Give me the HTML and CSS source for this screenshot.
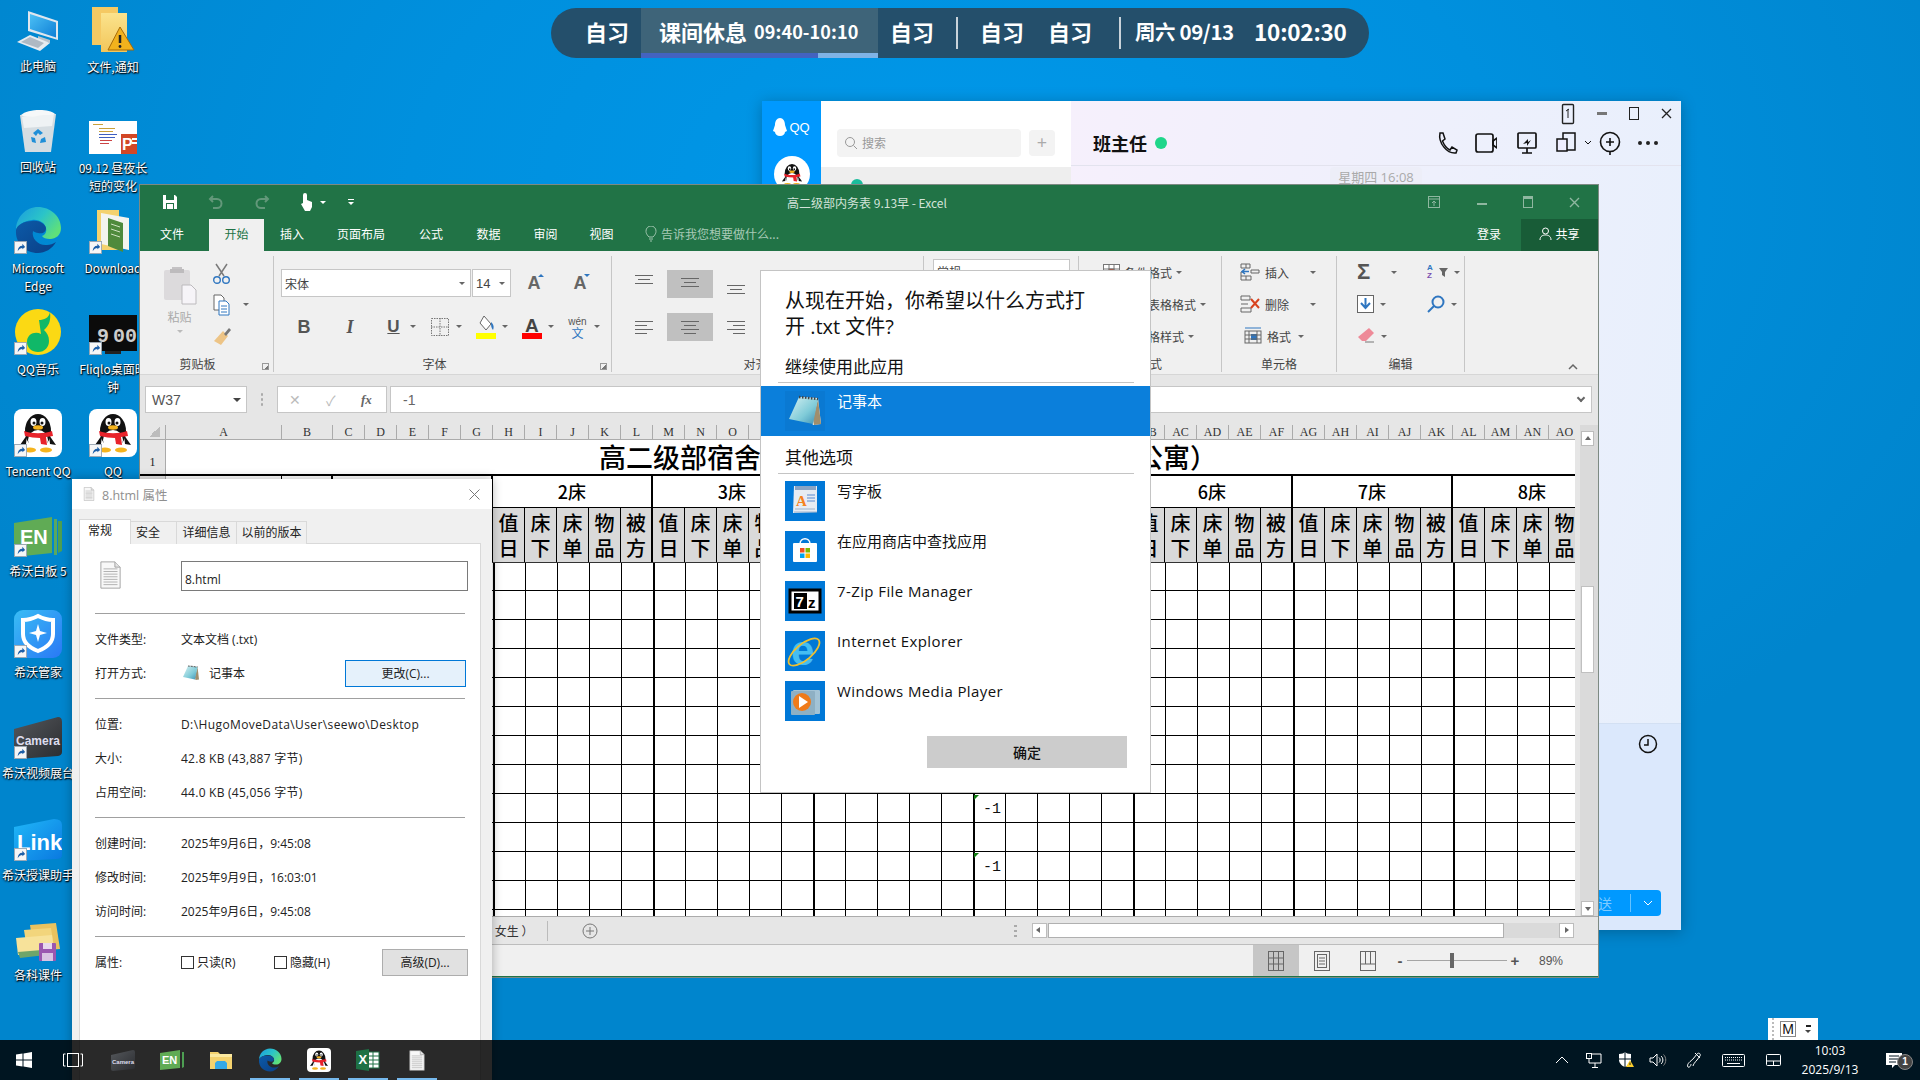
FILE: index.html
```html
<!DOCTYPE html>
<html lang="zh-CN">
<head>
<meta charset="utf-8">
<title>Desktop</title>
<link rel="stylesheet" href="styles.css">
</head>
<body>
<svg class="defs" aria-hidden="true">
  <defs>
    <linearGradient id="edgeTop" x1="0" y1="0" x2="1" y2="0.6"><stop offset="0" stop-color="#1a9be0"/><stop offset=".55" stop-color="#2bc4c8"/><stop offset="1" stop-color="#5fe07a"/></linearGradient>
    <linearGradient id="edgeLow" x1="0" y1="0" x2="1" y2="1"><stop offset="0" stop-color="#0c5aa8"/><stop offset="1" stop-color="#0a3f86"/></linearGradient>
    <linearGradient id="padG" x1="0" y1="0" x2="1" y2="1"><stop offset="0" stop-color="#d8f1f2"/><stop offset=".6" stop-color="#7fcbd8"/><stop offset="1" stop-color="#3d8fb4"/></linearGradient>
    <linearGradient id="folderG" x1="0" y1="0" x2="0" y2="1"><stop offset="0" stop-color="#fbe38d"/><stop offset="1" stop-color="#f2c65a"/></linearGradient>
    <linearGradient id="screenG" x1="0" y1="0" x2="1" y2="1"><stop offset="0" stop-color="#4cc0f5"/><stop offset="1" stop-color="#0e7fd6"/></linearGradient>
    <linearGradient id="camG" x1="0" y1="0" x2="1" y2="1"><stop offset="0" stop-color="#55585c"/><stop offset="1" stop-color="#2a2c30"/></linearGradient>
    <linearGradient id="linkG" x1="0" y1="0" x2="1" y2="1"><stop offset="0" stop-color="#20b8f8"/><stop offset="1" stop-color="#0a78e0"/></linearGradient>
    <linearGradient id="shieldG" x1="0" y1="0" x2="1" y2="1"><stop offset="0" stop-color="#39bdf5"/><stop offset="1" stop-color="#2a78f5"/></linearGradient>
    <symbol id="edge" viewBox="0 0 48 48">
      <path d="M2 24C2 11 12 1 24 1c12 0 23 9 23 21 0 7-5 11-11 11-4 0-7-1-8-3 3-1 5-4 4-8-1-5-7-9-14-8C10 15 3 19 2 24z" fill="url(#edgeTop)"/>
      <path d="M2 24c1-5 8-9 16-9 7-1 13 3 14 7 0 2-1 4-3 5-4 1-9-1-10-2-2 8 6 15 14 14 3 0 6-1 9-3-4 7-11 11-18 11C11 47 1 37 2 24z" fill="url(#edgeLow)"/>
    </symbol>
    <symbol id="penguin" viewBox="0 0 48 48">
      <rect width="48" height="48" rx="8" fill="#fff"/>
      <ellipse cx="24" cy="22" rx="13" ry="17" fill="#111"/>
      <path d="M13 26 6 36l6-1zM35 26l7 10-6-1z" fill="#111"/>
      <ellipse cx="24" cy="31" rx="10" ry="10" fill="#fff"/>
      <ellipse cx="19.500" cy="13" rx="3" ry="4" fill="#fff"/>
      <ellipse cx="28.500" cy="13" rx="3" ry="4" fill="#fff"/>
      <circle cx="20" cy="14" r="1.500" fill="#111"/><circle cx="28" cy="14" r="1.500" fill="#111"/>
      <ellipse cx="24" cy="18.500" rx="5" ry="2.200" fill="#f5b41e"/>
      <path d="M10 22c8 3 20 3 28 0l1 5-7 1 1 8-6-1-1-6c-5 0-10-1-15-2z" fill="#e8232b"/>
      <ellipse cx="16" cy="41" rx="6" ry="2.500" fill="#f5b41e"/><ellipse cx="32" cy="41" rx="6" ry="2.500" fill="#f5b41e"/>
    </symbol>
    <symbol id="shortcut" viewBox="0 0 14 14">
      <rect x=".5" y=".5" width="13" height="13" fill="#f6f6f6" stroke="#9aa6b2"/>
      <path d="M4 11c0-4 2-6 5-6V3l3 3.500L9 9V7.500C7 7.500 5.500 8.500 4 11z" fill="#1d5fa8"/>
    </symbol>
    <symbol id="notepad" viewBox="0 0 40 40">
      <path d="M14 6 33 7l3 26-8 1z" fill="#f2f2ee"/>
      <path d="M33 8l3 25-7 1-1-6z" fill="#a08e6c"/>
      <path d="M14 6 33 8 28 33 4 28z" fill="url(#padG)"/>
      <path d="M14 6 33 8" stroke="#444" stroke-width="2.500" stroke-dasharray="1.500 1.500"/>
    </symbol>
    <symbol id="doc" viewBox="0 0 24 32">
      <path d="M1 1h16l6 6v24H1z" fill="#f8f8f8" stroke="#9c9c9c"/>
      <path d="M17 1v6h6" fill="#e4e4e4" stroke="#9c9c9c"/>
      <path d="M4 9h16M4 12h16M4 15h16M4 18h16M4 21h16M4 24h16M4 27h16" stroke="#a9a9a9"/>
    </symbol>
  </defs>
</svg>

<main class="desktop">

  <div class="dicon c1 t4"><div class="di"><svg width="44" height="42" viewBox="0 0 44 42"><path d="M12 1 42 11v19L12 21z" fill="#dfe6ee"/><path d="M14 4 40 12.500V27.500L14 19z" fill="url(#screenG)"/><path d="M22 26 34 30v3l-12-3z" fill="#b9c3cc"/><path d="M1 32 14 25l20 8-10 8z" fill="#e6ebf0"/><path d="M5 32l9-5 14 6-6 5z" fill="#aeb9c4"/></svg></div><span class="dl">此电脑</span></div>
  <div class="dicon c2 t5"><div class="di"><svg width="44" height="46" viewBox="0 0 44 46"><path d="M1 0h26v38H1z" fill="#f5c963"/><path d="M10 6h26v39H10z" fill="url(#folderG)"/><path d="M29 20 17 43h26z" fill="#f2b21d" stroke="#a66a08"/><path d="M29 28v8" stroke="#222" stroke-width="2.500"/><circle cx="29" cy="39.500" r="1.400" fill="#222"/></svg></div><span class="dl">文件,通知</span></div>

  <div class="dicon c1 t105"><div class="di"><svg width="38" height="44" viewBox="0 0 38 44"><path d="M1 6l36-1-5 38H6z" fill="#d5dde2"/><path d="M2 6c6-6 28-7 34-1-4 4-28 5-34 1z" fill="#f6f8f9"/><path d="M3 8c5-2 10 1 15-1 6-2 12 0 17-2l-2 12-28 2z" fill="#eef2f4"/><path d="M14 24l5-4 5 4-3 2-2-2-2 3zM12 28l4 1 1 5-4-1zM26 28l1 5-6 1 1-4z" fill="#1f8fd8"/></svg></div><span class="dl">回收站</span></div>
  <div class="dicon c2 t106"><div class="di"><svg width="48" height="33" viewBox="0 0 48 33"><rect y="0" width="48" height="33" fill="#fff"/><path d="M4 3h10v1H4zM10 7h16v1H10zM10 10h14v1H10z" fill="#c9a13a"/><path d="M10 13h18v1H10zM10 16h16v1H10z" fill="#3f5fc0"/><path d="M11 19h12v1H11zM11 22h9v1H11z" fill="#c44"/><rect x="32" y="13" width="16" height="20" fill="#d24726"/><text x="33" y="29" class="svgp">P</text><path d="M43 17h5v2h-5zM43 21h5v2h-5z" fill="#fff"/></svg></div><span class="dl">09.12 昼夜长短的变化</span></div>

  <div class="dicon c1 t206"><div class="di"><svg class="ic48"><use href="#edge"/></svg><svg class="sc"><use href="#shortcut"/></svg></div><span class="dl">Microsoft Edge</span></div>
  <div class="dicon c2 t206"><div class="di"><svg width="34" height="44" viewBox="0 0 34 44"><path d="M1 0h22v40H1z" fill="#f4d26e"/><path d="M5 3l28 5v32L5 34z" fill="#f4f4ee"/><path d="M12 8l15 5v29l-15-6z" fill="#4f8a3c"/><path d="M15 14l9 3M15 19l9 3M15 24l9 3" stroke="#cfe3c2"/></svg><svg class="sc"><use href="#shortcut"/></svg></div><span class="dl">Download</span></div>

  <div class="dicon c1 t307"><div class="di"><svg width="46" height="46" viewBox="0 0 46 46"><ellipse cx="23" cy="23" rx="23" ry="23" fill="#fbd914"/><path d="M35 3c-1 6-6 8-11 8l2 14c-6-3-14 0-14 8 0 6 5 10 11 10 7 0 11-5 11-11 0-5-2-8-5-11l2-2c3-3 5-8 4-16z" fill="#10b868"/></svg><svg class="sc"><use href="#shortcut"/></svg></div><span class="dl">QQ音乐</span></div>
  <div class="dicon c2 t307"><div class="di"><svg width="48" height="40" viewBox="0 0 48 40"><rect width="48" height="36" fill="#0b0b0b"/><text x="8" y="27" class="svgclock">9</text><text x="24" y="27" class="svgclock">00</text><path d="M16 36h16v3H16z" fill="#222"/></svg><svg class="sc"><use href="#shortcut"/></svg></div><span class="dl">Fliqlo桌面时钟</span></div>

  <div class="dicon c1 t409"><div class="di"><svg class="ic48"><use href="#penguin"/></svg><svg class="sc"><use href="#shortcut"/></svg></div><span class="dl">Tencent QQ</span></div>
  <div class="dicon c2 t409"><div class="di"><svg class="ic48"><use href="#penguin"/></svg><svg class="sc"><use href="#shortcut"/></svg></div><span class="dl">QQ</span></div>

  <div class="dicon c1 t509"><div class="di"><svg width="48" height="40" viewBox="0 0 48 40"><path d="M44 4h4v30l-4 2z" fill="#4d9e52"/><path d="M40 2h3v36h-3z" fill="#5aa85f"/><path d="M0 6 38 0v36L0 40z" fill="#60ab55"/><text x="6" y="27" class="svgen">EN</text></svg><svg class="sc"><use href="#shortcut"/></svg></div><span class="dl">希沃白板 5</span></div>
  <div class="dicon c1 t610"><div class="di"><svg class="ic48" viewBox="0 0 48 48"><rect width="48" height="48" rx="9" fill="url(#shieldG)"/><path d="M9 10c6 0 11-2 15-4 4 2 9 4 15 4v14c0 9-7 14-15 17C16 38 9 33 9 24z" fill="none" stroke="#fff" stroke-width="4"/><path d="M24 14l2 7 7 2-7 2-2 7-2-7-7-2 7-2z" fill="#fff"/></svg><svg class="sc"><use href="#shortcut"/></svg></div><span class="dl">希沃管家</span></div>
  <div class="dicon c1 t711"><div class="di"><svg width="48" height="42" viewBox="0 0 48 42"><path d="M0 12 44 0q4 0 4 5v30q0 3-4 4L4 42q-4 0-4-4z" fill="url(#camG)"/><text x="2" y="28" class="svgcam">Camera</text></svg><svg class="sc"><use href="#shortcut"/></svg></div><span class="dl">希沃视频展台</span></div>
  <div class="dicon c1 t813"><div class="di"><svg width="48" height="42" viewBox="0 0 48 42"><path d="M0 8 40 0q8 0 8 6v30q0 4-6 4L4 42q-4 0-4-4z" fill="url(#linkG)"/><text x="3" y="31" class="svglink">Link</text></svg><svg class="sc"><use href="#shortcut"/></svg></div><span class="dl">希沃授课助手</span></div>
  <div class="dicon c1 t913"><div class="di"><svg width="44" height="38" viewBox="0 0 44 38"><path d="M14 2l26-2 4 26-26 2z" fill="#e9c25f"/><path d="M8 7l27-2 4 26-27 2z" fill="#f2d57c"/><path d="M0 15l36-3 2 17-36 3z" fill="#f7e29a"/><path d="M2 29l36-3v5L4 35z" fill="#6fa56a"/><rect x="23" y="20" width="17" height="18" rx="1" fill="#9a57b0"/><rect x="27" y="20" width="9" height="6" fill="#e8d8ee"/><rect x="26" y="30" width="11" height="8" fill="#d9c4e3"/></svg></div><span class="dl">各科课件</span></div>

  <!-- class timetable bar -->
  <div class="sched">
    <span class="s-a s-first">自习</span>
    <div class="s-now">
      <div class="s-now-t"><span class="s-big">课间休息</span><span class="s-time">09:40-10:10</span></div>
      <div class="s-prog"><i class="s-p1"></i><i class="s-p2"></i></div>
    </div>
    <span class="s-a s-second">自习</span>
    <i class="s-div"></i>
    <span class="s-a s-third">自习</span>
    <span class="s-a s-fourth">自习</span>
    <i class="s-div"></i>
    <span class="s-date">周六 09/13</span>
    <span class="s-clock">10:02:30</span>
  </div>

  <!-- QQ window -->
  <section class="qq">
    <div class="qq-rail">
      <div class="qq-logo"><svg width="14" height="18" viewBox="0 0 14 18"><path d="M7 0c3 0 5 3 5 7l2 6-2 1c0 2-2 4-5 4s-5-2-5-4l-2-1 2-6c0-4 2-7 5-7z" fill="#fff"/></svg><span>QQ</span></div>
      <svg class="qq-ava" width="36" height="36" viewBox="0 0 48 48"><circle cx="24" cy="24" r="24" fill="#fff"/><use href="#penguin" x="6" y="2" width="36" height="46"/></svg>
    </div>
    <div class="qq-list">
      <div class="qq-search">
        <div class="qq-sbox"><svg width="14" height="14" viewBox="0 0 14 14"><circle cx="6" cy="6" r="4.500" fill="none" stroke="#999"/><path d="M9.500 9.500 13 13" stroke="#999"/></svg><span>搜索</span></div>
        <div class="qq-plus">+</div>
      </div>
      <div class="qq-row"><i class="qq-teal"></i></div>
    </div>
    <div class="qq-chat">
      <div class="qq-ctrl">
        <svg width="14" height="22" viewBox="0 0 14 22"><rect x="1.500" y="1.500" width="11" height="19" rx="1" fill="none" stroke="#222" stroke-width="1.400"/><path d="M7 6v9M5 8l3-2" stroke="#222"/></svg>
        <i class="qq-min"></i>
        <i class="qq-max"></i>
        <svg width="11" height="11" viewBox="0 0 11 11"><path d="M1 1l9 9M10 1l-9 9" stroke="#222" stroke-width="1.300"/></svg>
      </div>
      <div class="qq-head">
        <h2>班主任</h2><i class="qq-dot"></i>
        <div class="qq-tools">
          <svg width="24" height="24" viewBox="0 0 24 24" fill="none" stroke="#111" stroke-width="1.500"><path d="M5 2 8 2 10 8 7.500 10C9 14 11 17 15 19L17 16 22 19 21 22C12 23 3 12 5 2z"/></svg>
          <svg class="m19" width="22" height="24" viewBox="0 0 22 24" fill="none" stroke="#111" stroke-width="1.700"><rect x="1" y="3" width="17" height="18" rx="2"/><path d="M18 10l4-3v10l-4-3z"/></svg>
          <svg class="m19" width="22" height="24" viewBox="0 0 22 24" fill="none" stroke="#111" stroke-width="1.700"><rect x="2" y="2" width="18" height="15" rx="1"/><path d="M11 17v5M6 22h10"/><path d="M7 13l5-5v3l3-2-4 6v-3z" fill="#111" stroke="none"/></svg>
          <svg class="m17" width="36" height="24" viewBox="0 0 36 24" fill="none" stroke="#111" stroke-width="1.500"><rect x="8" y="2" width="12" height="17"/><rect x="2" y="8" width="10" height="12" fill="#eef"/><path d="M30 10l3 3 3-3" stroke-width="1"/></svg>
          <svg class="m7" width="24" height="26" viewBox="0 0 24 26" fill="none" stroke="#111" stroke-width="1.600"><circle cx="12" cy="12" r="9.500"/><path d="M12 8v8M8 12h8M12 22v3"/></svg>
          <svg class="m15" width="22" height="24" viewBox="0 0 22 24"><circle cx="3" cy="12" r="2" fill="#222"/><circle cx="11" cy="12" r="2" fill="#222"/><circle cx="19" cy="12" r="2" fill="#222"/></svg>
        </div>
      </div>
      <div class="qq-msgs"><span class="qq-stamp">星期四 16:08</span></div>
      <div class="qq-input">
        <svg class="qq-clock" width="20" height="20" viewBox="0 0 20 20" fill="none" stroke="#111" stroke-width="1.500"><circle cx="10" cy="10" r="8.500"/><path d="M10 5v6H6"/></svg>
        <div class="qq-send"><span>发送</span><i></i><svg width="12" height="8" viewBox="0 0 12 8"><path d="M2 2l4 4 4-4" fill="none" stroke="#fff"/></svg></div>
      </div>
    </div>
  </section>

  <!-- Excel window -->
  <section class="xl">
    <div class="xl-title">
      <div class="qat">
        <svg width="16" height="16" viewBox="0 0 16 16"><path d="M1 1h12l2 2v12H1z" fill="#fff"/><rect x="4" y="1" width="8" height="5" fill="#217346"/><rect x="4" y="9" width="8" height="6" fill="#217346"/><rect x="5" y="10" width="6" height="5" fill="#fff"/></svg>
        <svg class="q-un" width="16" height="16" viewBox="0 0 16 16" fill="none" stroke="#63987a" stroke-width="2"><path d="M5 2 2 5l3 3M2 5h7a4 4 0 0 1 0 9H5"/></svg>
        <svg class="q-re" width="16" height="16" viewBox="0 0 16 16" fill="none" stroke="#63987a" stroke-width="2"><path d="M11 2l3 3-3 3M14 5H7a4 4 0 0 0 0 9h4"/></svg>
        <svg class="q-to" width="14" height="18" viewBox="0 0 14 18"><path d="M3 2a2 2 0 0 1 4 0v5l5 2v5l-2 4H5L1 11l2-1z" fill="#fff"/></svg>
        <i class="caret wh"></i>
        <span class="q-cu"><i></i><i class="caret wh"></i></span>
      </div>
      <span class="xl-name">高二级部内务表 9.13早 - Excel</span>
      <div class="xl-win">
        <svg width="14" height="12" viewBox="0 0 14 12" fill="none" stroke="#8fb7a0"><rect x="1.500" y=".5" width="11" height="11"/><path d="M1 3h12M7 10V5M5 7l2-2 2 2"/></svg>
        <svg width="10" height="10" viewBox="0 0 10 10"><path d="M0 6h10v2H0z" fill="#8fb7a0"/></svg>
        <svg width="10" height="12" viewBox="0 0 10 12" fill="none" stroke="#8fb7a0"><rect x=".5" y=".5" width="9" height="11"/><path d="M0 2h10" stroke-width="2"/></svg>
        <svg width="11" height="11" viewBox="0 0 11 11"><path d="M1 1l9 9M10 1l-9 9" stroke="#8fb7a0" stroke-width="1.400"/></svg>
      </div>
    </div>
    <nav class="xl-tabs">
      <span class="t t-file">文件</span><span class="t t-on">开始</span><span class="t t-ins">插入</span><span class="t t-page">页面布局</span><span class="t t-f">公式</span><span class="t t-d">数据</span><span class="t t-r">审阅</span><span class="t t-v">视图</span>
      <span class="t-tell"><svg width="12" height="16" viewBox="0 0 12 16" fill="none" stroke="#9fc5ae"><path d="M4 11C1 8 1 6 1 5a5 5 0 0 1 10 0c0 1 0 3-3 6zM4 13h4M5 15h2"/></svg>告诉我您想要做什么...</span>
      <span class="t-login">登录</span>
      <span class="t-share"><svg width="13" height="13" viewBox="0 0 13 13" fill="none" stroke="#fff"><circle cx="6.500" cy="4" r="3"/><path d="M1 13c0-4 3-5 5.500-5S12 9 12 13"/></svg>共享</span>
    </nav>
    <div class="ribbon">
      <div class="rg g-clip">
        <div class="rg-body clip-body">
          <div class="paste">
            <svg width="34" height="40" viewBox="0 0 34 40"><rect x="1" y="5" width="26" height="30" rx="2" fill="#dcdadc"/><path d="M9 5h10V2h-10z" fill="#c4c2c4"/><rect x="7" y="4" width="14" height="4" fill="#bdbbbd"/><path d="M19 20h9l5 5v14H19z" fill="#f6f4f8" stroke="#bcbabd"/></svg>
            <span>粘贴</span><i class="caret lt"></i>
          </div>
          <div class="clip-small">
            <div><svg width="17" height="22" viewBox="0 0 17 22" fill="none"><path d="M3 1l8 12M14 1 6 13" stroke="#7a7a7a" stroke-width="1.500"/><circle cx="4" cy="17" r="3.300" stroke="#2f76c0" stroke-width="1.400"/><circle cx="13" cy="17" r="3.300" stroke="#2f76c0" stroke-width="1.400"/></svg></div>
            <div class="cp"><svg width="17" height="22" viewBox="0 0 17 22" fill="none" stroke="#666"><path d="M1 1h7l3 3v12H1z" fill="#fff"/><path d="M6 7h7l3 3v11H6z" fill="#fff" stroke="#2f76c0"/><path d="M8 12h6M8 15h6M8 18h6" stroke="#2f76c0"/></svg><i class="caret"></i></div>
            <div><svg width="18" height="20" viewBox="0 0 18 20"><path d="M10 5l5 5-7 9-7-4z" fill="#edc486"/><path d="M11 8l5-6 2 2-5 6z" fill="#777"/></svg></div>
          </div>
        </div>
        <div class="rg-label lab-clip">剪贴板<i class="launch"></i></div>
      </div>
      <div class="rg g-font">
        <div class="rg-body font-body">
          <div class="frow1">
            <div class="fbox fname"><span>宋体</span><i class="caret"></i></div>
            <div class="fbox fsize"><span>14</span><i class="caret"></i></div>
            <div class="fbtn"><b class="fa">A</b><i class="tri up"></i></div>
            <div class="fbtn"><b class="fa fa2">A</b><i class="tri dn"></i></div>
          </div>
          <div class="frow2">
            <div class="fit"><b class="gl">B</b></div>
            <div class="fit"><b class="gl it">I</b></div>
            <div class="fit sh"><b class="gl un">U</b><i class="caret"></i></div>
            <div class="fit sh"><svg width="18" height="18" viewBox="0 0 18 18" fill="none" stroke="#777" stroke-dasharray="1.500 1"><rect x=".5" y=".5" width="17" height="17"/><path d="M9 0v18M0 9h18"/></svg><i class="caret"></i></div>
            <div class="fit sh"><svg width="20" height="24" viewBox="0 0 20 24"><path d="M8 1l7 8-5 6-6-7z" fill="#fff" stroke="#666"/><path d="M15 7c3 3 3 5 2 8-2-2-2-5-2-8z" fill="#2f76c0"/><rect y="18" width="20" height="6" fill="#ff0"/></svg><i class="caret"></i></div>
            <div class="fit sh"><svg width="20" height="24" viewBox="0 0 20 24"><text x="3" y="17" class="svga">A</text><rect y="18" width="20" height="6" fill="#f00"/></svg><i class="caret"></i></div>
            <div class="fit sh wen"><span class="w1">wén</span><span class="w2">文</span><i class="caret"></i></div>
          </div>
        </div>
        <div class="rg-label lab-font">字体<i class="launch"></i></div>
      </div>
      <div class="rg g-align">
        <div class="rg-body al-body">
          <i class="al a-top"></i><i class="al a-mid on"></i><i class="al a-bot"></i>
          <i class="al a-l"></i><i class="al a-c on"></i><i class="al a-r"></i>
        </div>
        <div class="rg-label">对齐方式</div>
      </div>
      <div class="rg g-num">
        <div class="rg-body num-body"><div class="nbox">常规</div></div>
        <div class="rg-label">数字</div>
      </div>
      <div class="rg g-sty">
        <div class="rg-body col-list">
          <div class="rrow"><svg width="17" height="16" viewBox="0 0 17 16" fill="none" stroke="#777"><rect x=".5" y=".5" width="16" height="15" fill="#fff"/><path d="M0 5h17M0 10h17M6 0v16M11 0v16"/><rect x="6" y="5" width="5" height="5" fill="#d24726"/></svg><span>条件格式</span><i class="caret"></i></div>
          <div class="rrow"><svg width="17" height="16" viewBox="0 0 17 16" fill="none" stroke="#777"><rect x=".5" y=".5" width="16" height="15" fill="#fff"/><path d="M0 5h17M0 10h17"/></svg><span>套用表格格式</span><i class="caret"></i></div>
          <div class="rrow"><svg width="17" height="16" viewBox="0 0 17 16" fill="none" stroke="#777"><rect x=".5" y=".5" width="16" height="15" fill="#fff"/></svg><span>单元格样式</span><i class="caret"></i></div>
        </div>
        <div class="rg-label">样式</div>
      </div>
      <div class="rg g-cell">
        <div class="rg-body col-list">
          <div class="rrow r-ins"><svg width="20" height="18" viewBox="0 0 20 18" fill="none" stroke="#666"><path d="M1 1h9v4H1zM1 13h10v4H1zM1 13V9h3M6 1v4M6 13v4"/><path d="M11 7h8v3h-8z"/><path d="M9 8.500H3M5 6 2 8.500 5 11" stroke="#2f76c0" stroke-width="1.500"/></svg><span>插入</span><i class="caret"></i></div>
          <div class="rrow r-ins"><svg width="20" height="18" viewBox="0 0 20 18" fill="none" stroke="#666"><path d="M1 1h9v4H1zM1 13h10v4H1zM1 9h7"/><path d="M11 4l8 9M19 4l-8 9" stroke="#d8431f" stroke-width="2"/></svg><span>删除</span><i class="caret"></i></div>
          <div class="rrow r-fmt"><svg width="18" height="20" viewBox="0 0 18 20" fill="none" stroke="#666"><path d="M1 2h16" stroke="#2f76c0"/><rect x="1" y="5" width="16" height="12"/><rect x="7" y="8" width="6" height="6" fill="#2f76c0" stroke="none"/><path d="M1 9h16M1 13h16M5 5v12M13 5v12"/></svg><span>格式</span><i class="caret"></i></div>
        </div>
        <div class="rg-label">单元格</div>
      </div>
      <div class="rg g-edit">
        <div class="rg-body edit-body">
          <div class="ec"><b class="sigma">Σ</b><i class="caret"></i></div>
          <div class="ec"><span class="az"><em>A</em><em class="z">Z</em></span><svg width="9" height="9" viewBox="0 0 9 9"><path d="M0 0h9L6 4v5L3 7V4z" fill="#666"/></svg><i class="caret"></i></div>
          <div class="ec"><svg width="17" height="18" viewBox="0 0 17 18"><rect x=".5" y=".5" width="16" height="17" fill="#fff" stroke="#666"/><path d="M8.500 3v9M4 8l4.500 5L13 8" fill="none" stroke="#2f76c0" stroke-width="2"/></svg><i class="caret"></i></div>
          <div class="ec"><svg width="18" height="18" viewBox="0 0 18 18" fill="none" stroke="#2f76c0" stroke-width="2"><circle cx="11" cy="7" r="5.500"/><path d="M7 11l-6 6"/></svg><i class="caret"></i></div>
          <div class="ec"><svg width="18" height="18" viewBox="0 0 18 18"><path d="M12 1l5 5-8 8H5l-4-4z" fill="#ee8a98"/><path d="M8 15h9" stroke="#777"/></svg><i class="caret"></i></div>
        </div>
        <div class="rg-label">编辑</div>
      </div>
      <div class="rg-rest"><svg width="10" height="7" viewBox="0 0 10 7"><path d="M1 6l4-4 4 4" fill="none" stroke="#666" stroke-width="1.500"/></svg></div>
    </div>
    <div class="fbar">
      <div class="namebox"><span>W37</span><i class="caret dk"></i></div>
      <div class="fdots"></div>
      <div class="fxbox"><span class="x1">✕</span><span class="x2">✓</span><em>fx</em></div>
      <div class="finput"><span>-1</span><i class="chev"></i></div>
    </div>
    <div class="sheetwrap">
      <div class="sheet">
        <div class="colhead">
          <span class="corner"></span><span>A</span><span>B</span><span>C</span><span>D</span><span>E</span><span>F</span><span>G</span><span>H</span><span>I</span><span>J</span><span>K</span><span>L</span><span>M</span><span>N</span><span>O</span><span>P</span><span>Q</span><span>R</span><span>S</span><span>T</span><span>U</span><span>V</span><span>W</span><span>X</span><span>Y</span><span>Z</span><span>AA</span><span>AB</span><span>AC</span><span>AD</span><span>AE</span><span>AF</span><span>AG</span><span>AH</span><span>AI</span><span>AJ</span><span>AK</span><span>AL</span><span>AM</span><span>AN</span><span>AO</span>
        </div>
        <div class="row1"><span class="rh">1</span><div class="row1-t"><span>高二级部宿舍</span><span class="t2">公寓）</span></div></div>
        <div class="row2">
          <span class="rh"></span><span class="ca"></span><span class="cb"></span>
          <span class="bed">1床</span><span class="bed">2床</span><span class="bed">3床</span><span class="bed">4床</span><span class="bed">5床</span><span class="bed">6床</span><span class="bed">7床</span><span class="bed">8床</span>
        </div>
        <div class="row3">
          <span class="rh"></span><span class="ca"></span><span class="cb"></span>
          <span class="hc">值<br>日</span><span class="hc">床<br>下</span><span class="hc">床<br>单</span><span class="hc">物<br>品</span><span class="hc">被<br>方</span>
          <span class="hc">值<br>日</span><span class="hc">床<br>下</span><span class="hc">床<br>单</span><span class="hc">物<br>品</span><span class="hc">被<br>方</span>
          <span class="hc">值<br>日</span><span class="hc">床<br>下</span><span class="hc">床<br>单</span><span class="hc">物<br>品</span><span class="hc">被<br>方</span>
          <span class="hc">值<br>日</span><span class="hc">床<br>下</span><span class="hc">床<br>单</span><span class="hc">物<br>品</span><span class="hc">被<br>方</span>
          <span class="hc">值<br>日</span><span class="hc">床<br>下</span><span class="hc">床<br>单</span><span class="hc">物<br>品</span><span class="hc">被<br>方</span>
          <span class="hc">值<br>日</span><span class="hc">床<br>下</span><span class="hc">床<br>单</span><span class="hc">物<br>品</span><span class="hc">被<br>方</span>
          <span class="hc">值<br>日</span><span class="hc">床<br>下</span><span class="hc">床<br>单</span><span class="hc">物<br>品</span><span class="hc">被<br>方</span>
          <span class="hc">值<br>日</span><span class="hc">床<br>下</span><span class="hc">床<br>单</span><span class="hc">物<br>品</span><span class="hc">被<br>方</span>
        </div>
        <div class="bodyrow">
          <span class="rh"></span>
          <div class="grid"><span class="val v1">-1</span><span class="val v2">-1</span></div>
        </div>
      </div>
      <div class="vscroll"><i class="vb vup"></i><i class="vthumb"></i><i class="vb vdn"></i></div>
    </div>
    <div class="sheetbar">
      <span class="tabtxt">（ 女生 ）</span><i class="tabsep"></i>
      <svg class="addsheet" width="16" height="16" viewBox="0 0 16 16" fill="none" stroke="#777"><circle cx="8" cy="8" r="7"/><path d="M8 4v8M4 8h8"/></svg>
      <i class="sdots"></i>
      <div class="hscroll"><i class="hb hl"></i><i class="hthumb"></i><i class="htrack"></i><i class="hb hr"></i></div>
    </div>
    <div class="status">
      <div class="sv on"><svg width="16" height="20" viewBox="0 0 16 20" fill="none" stroke="#666"><rect x=".5" y=".5" width="15" height="19"/><path d="M5.500 0v20M10.500 0v20M0 7h16M0 13h16"/></svg></div>
      <div class="sv"><svg width="16" height="20" viewBox="0 0 16 20" fill="none" stroke="#666"><rect x=".5" y=".5" width="15" height="19"/><rect x="3.500" y="3.500" width="9" height="13"/><path d="M5 7h6M5 10h6M5 13h6"/></svg></div>
      <div class="sv"><svg width="16" height="20" viewBox="0 0 16 20" fill="none" stroke="#666"><rect x=".5" y=".5" width="15" height="19"/><path d="M0 13h16M5.500 0v13M10.500 0v13"/></svg></div>
      <div class="zoomer"><span class="zm">-</span><div class="ztrack"><i class="zthumb"></i></div><span class="zm zp">+</span><span class="zpct">89%</span></div>
    </div>
  </section>

  <!-- Open-with dialog -->
  <section class="owd">
    <h1>从现在开始，你希望以什么方式打开 .txt 文件?</h1>
    <h3>继续使用此应用</h3>
    <div class="app sel"><div class="aic"><svg width="40" height="40"><use href="#notepad"/></svg></div><span>记事本</span></div>
    <h3 class="h-other">其他选项</h3>
    <div class="apps">
      <div class="app"><div class="aic"><svg width="40" height="40" viewBox="0 0 40 40"><path d="M9 5h23v26l-24 1z" fill="#e7ecf3"/><rect x="10" y="5" width="21" height="4" fill="#8aa4c4"/><text x="11" y="25" class="svgw">A</text><path d="M22 14h8M22 17h8M22 20h8" stroke="#5a8ad0"/><path d="M10 28h20M9 31h23" stroke="#9eb3cc"/></svg></div><span>写字板</span></div>
      <div class="app"><div class="aic"><svg width="40" height="40" viewBox="0 0 40 40"><path d="M15 13c0-7 10-7 10 0" fill="none" stroke="#fff" stroke-width="1.500"/><rect x="8" y="12" width="24" height="19" rx="1" fill="#fff"/><rect x="15" y="17" width="4.500" height="4.500" fill="#f25022"/><rect x="20.500" y="17" width="4.500" height="4.500" fill="#7fba00"/><rect x="15" y="22.500" width="4.500" height="4.500" fill="#00a4ef"/><rect x="20.500" y="22.500" width="4.500" height="4.500" fill="#ffb900"/></svg></div><span>在应用商店中查找应用</span></div>
      <div class="app"><div class="aic"><svg width="40" height="40" viewBox="0 0 40 40"><rect x="5" y="9" width="30" height="22" fill="#fff" stroke="#000" stroke-width="3"/><rect x="9" y="12" width="13" height="16" fill="#000"/><text x="10.500" y="26" class="svg7">7</text><text x="23" y="27" class="svgz">z</text></svg></div><span class="lat">7-Zip File Manager</span></div>
      <div class="app"><div class="aic"><svg width="40" height="40" viewBox="0 0 40 40"><text x="6" y="34" class="svgie">e</text><ellipse cx="19" cy="21" rx="19" ry="8" transform="rotate(-40 19 21)" fill="none" stroke="#f0c030" stroke-width="1.800"/></svg></div><span class="lat">Internet Explorer</span></div>
      <div class="app"><div class="aic"><svg width="40" height="40" viewBox="0 0 40 40"><rect x="8" y="9" width="27" height="24" rx="1" fill="#a3c3d6"/><rect x="6" y="10" width="24" height="24" rx="1" fill="#8eb0c4"/><circle cx="17" cy="21" r="9" fill="#ef7b1a"/><path d="M14 15l9 6-9 6z" fill="#fff"/></svg></div><span class="lat">Windows Media Player</span></div>
    </div>
    <div class="owd-foot"><button class="okbtn">确定</button></div>
  </section>

  <!-- Properties -->
  <section class="prop">
    <div class="prop-title"><svg width="12" height="14"><use href="#doc"/></svg><span>8.html 属性</span><svg class="pclose" width="11" height="11" viewBox="0 0 11 11"><path d="M.5.500l10 10M10.500.500l-10 10" stroke="#777"/></svg></div>
    <div class="ptabs"><span class="pt on">常规</span><span class="pt p2">安全</span><span class="pt p3">详细信息</span><span class="pt p4">以前的版本</span></div>
    <div class="ppanel">
      <div class="phead"><svg width="21" height="28"><use href="#doc"/></svg><div class="pinput">8.html</div></div>
      <div class="psec">
        <div class="prow"><label>文件类型:</label><span>文本文档 (.txt)</span></div>
        <div class="prow"><label>打开方式:</label><svg class="pnote" width="20" height="20"><use href="#notepad"/></svg><span>记事本</span><button class="change">更改(C)...</button></div>
      </div>
      <div class="psec">
        <div class="prow"><label>位置:</label><span class="w-path">D:\HugoMoveData\User\seewo\Desktop</span></div>
        <div class="prow"><label>大小:</label><span class="w-num">42.8 KB (43,887 字节)</span></div>
        <div class="prow"><label>占用空间:</label><span class="w-num">44.0 KB (45,056 字节)</span></div>
      </div>
      <div class="psec">
        <div class="prow"><label>创建时间:</label><span>2025年9月6日，9:45:08</span></div>
        <div class="prow"><label>修改时间:</label><span>2025年9月9日，16:03:01</span></div>
        <div class="prow"><label>访问时间:</label><span>2025年9月6日，9:45:08</span></div>
      </div>
      <div class="psec last">
        <div class="prow"><label>属性:</label><i class="chk"></i><span class="cl1">只读(R)</span><i class="chk"></i><span>隐藏(H)</span><button class="adv">高级(D)...</button></div>
      </div>
    </div>
  </section>

  <!-- IME -->
  <div class="ime"><i class="ime-dots"></i><span class="ime-m">M</span><span class="ime-arrow"><i></i><i class="caret dk"></i></span></div>

  <!-- Taskbar -->
  <footer class="taskbar">
    <div class="tb-left">
      <div class="tb-start"><svg width="16" height="16" viewBox="0 0 16 16" fill="#fff"><path d="M0 2.500 6.500 1.600V7.500H0zM7.500 1.500 16 0V7.500H7.500zM0 8.500H6.500V14.400L0 13.500zM7.500 8.500H16V16L7.500 14.500z"/></svg></div>
      <div class="tb-view"><svg width="20" height="14" viewBox="0 0 20 14" fill="none" stroke="#fff"><rect x="4.500" y=".5" width="11" height="13"/><path d="M2.500 1H.5v12h2M17.500 1h2v12h-2"/></svg></div>
      <div class="tb-app"><svg width="24" height="21" viewBox="0 0 24 21"><path d="M0 5 22 0q2 0 2 2v15q0 2-2 2L2 21q-2 0-2-2z" fill="url(#camG)"/><text x="1" y="14" class="svgcam2">Camera</text></svg></div>
      <div class="tb-app"><svg width="24" height="20" viewBox="0 0 24 20"><path d="M22 2h2v15l-2 1z" fill="#4d9e52"/><path d="M0 3 20 0v18L0 20z" fill="#60ab55"/><text x="2" y="14" class="svgen2">EN</text></svg></div>
      <div class="tb-app"><svg width="22" height="18" viewBox="0 0 22 18"><path d="M0 1h8l2 2h12v15H0z" fill="#f4d26e"/><path d="M0 3h22v3H0z" fill="#fbe9a0"/><path d="M7 10h8l2 2v6H5v-6z" fill="#35a9e8"/></svg></div>
      <div class="tb-app on"><svg width="24" height="24"><use href="#edge"/></svg></div>
      <div class="tb-app on"><svg width="24" height="24"><use href="#penguin"/></svg></div>
      <div class="tb-app on"><svg width="24" height="22" viewBox="0 0 24 22"><rect x="11" y="3" width="12" height="16" fill="#fff" stroke="#217346"/><path d="M11 7h12M11 11h12M11 15h12M17 3v16" stroke="#217346"/><path d="M0 2 13 0v22L0 20z" fill="#1e7145"/><text x="2.500" y="15" class="svgx">X</text></svg></div>
      <div class="tb-app on"><svg width="16" height="21"><use href="#doc"/></svg></div>
    </div>
    <div class="tray">
      <div><svg width="14" height="8" viewBox="0 0 14 8" fill="none" stroke="#fff"><path d="M1 7l6-6 6 6"/></svg></div>
      <div><svg width="16" height="15" viewBox="0 0 16 15" fill="none" stroke="#fff"><rect x=".5" y=".5" width="5" height="5" fill="#001520"/><path d="M6 1h9v9H3V6M9 10v4M6 14.500h6M3 3h.5"/></svg></div>
      <div><svg width="16" height="16" viewBox="0 0 16 16"><path d="M1 2c3 0 5-1 6-2 1 1 3 2 6 2v6c0 3-3 6-6 7-3-1-6-4-6-7z" fill="#fff"/><path d="M7 0v15M1 7h12" stroke="#001520"/><path d="M12 8l4 7H8z" fill="#fccf2c"/><path d="M12 10.500v2.500" stroke="#222"/></svg></div>
      <div><svg width="18" height="14" viewBox="0 0 18 14" fill="none" stroke="#fff"><path d="M1 5h3l4-4v12L4 9H1z"/><path d="M10 4.500c1.500 1 1.500 4 0 5M12 3c2.500 2 2.500 6 0 8" /><path d="M14.500 1.500c3 3 3 8 0 11" stroke="#888"/></svg></div>
      <div><svg width="17" height="17" viewBox="0 0 17 17" fill="none" stroke="#fff"><path d="M2 15c-2-3 3-6 5-8l4-5c2-2 4 0 3 2l-3 4c-2 2-4 5-4 6M2 15c1 1 3-1 3-3M9 1l5 5"/></svg></div>
      <div><svg width="23" height="13" viewBox="0 0 23 13" fill="none" stroke="#fff"><rect x=".5" y=".5" width="22" height="12" rx="1"/><path d="M3 3.500h17M3 6h17" stroke-dasharray="1 1"/><path d="M5 9.500h13"/></svg></div>
      <div><svg width="15" height="12" viewBox="0 0 15 12" fill="none" stroke="#fff"><rect x=".5" y=".5" width="14" height="11" rx="1"/><path d="M0 7h15M7.500 7v5"/></svg></div>
      <div class="tb-clock"><span>10:03</span><span>2025/9/13</span></div>
      <div class="tb-note"><svg width="16" height="15" viewBox="0 0 16 15"><path d="M0 0h16v12H9l-3 3v-3H0z" fill="#fff"/><path d="M3 3h10M3 6h10M3 9h7" stroke="#001520"/></svg><span class="badge">1</span></div>
    </div>
  </footer>
</main>
</body>
</html>
```

FILE: styles.css
```css
* { box-sizing: border-box; }
html, body { margin: 0; padding: 0; width: 1920px; height: 1080px; overflow: hidden; }
body { font-family: "Open Sans", "Noto Sans CJK SC", sans-serif; font-size: 12px; color: #222; }
i, em { font-style: normal; }
.defs { width: 0; height: 0; display: block; overflow: hidden; }
.desktop { position: relative; width: 1920px; height: 1080px; overflow: hidden; background: radial-gradient(ellipse 1100px 700px at 50% 18%, #0098ea 0%, #0090de 50%, #0085cd 100%); }

/* desktop icons */
.dicon { position: absolute; width: 76px; display: flex; flex-direction: column; align-items: center; }
.c1 { left: 0; } .c2 { left: 75px; }
.t4 { top: 4px; } .t5 { top: 5px; } .t105 { top: 105px; } .t106 { top: 106px; } .t206 { top: 206px; } .t307 { top: 307px; } .t409 { top: 409px; }
.t509 { top: 509px; } .t610 { top: 610px; } .t711 { top: 711px; } .t813 { top: 813px; } .t913 { top: 913px; }
.di { position: relative; height: 48px; width: 48px; display: flex; align-items: flex-end; justify-content: center; margin-bottom: 5px; }
.ic48 { width: 48px; height: 48px; }
.sc { position: absolute; left: 0; bottom: 0; width: 13px; height: 13px; }
.dl { width: 76px; text-align: center; color: #fff; line-height: 18px; font-size: 12px; text-shadow: 0 1px 2px #000, 1px 1px 1px #012; font-family: "Noto Sans CJK SC", "Noto Sans", sans-serif; overflow-wrap: anywhere; }
.svgp { font: 700 16px "Liberation Sans", sans-serif; fill: #fff; }
.svgclock { font: 700 20px "Liberation Mono", monospace; fill: #ccc; }
.svgen { font: 700 20px "Liberation Sans", sans-serif; fill: #fff; }
.svgen2 { font: 700 11px "Liberation Sans", sans-serif; fill: #fff; }
.svgcam { font: 700 12px "Liberation Sans", sans-serif; fill: #dde; }
.svgcam2 { font: 700 6px "Liberation Sans", sans-serif; fill: #dde; }
.svglink { font: 700 22px "Liberation Sans", sans-serif; fill: #fff; }
.svga { font: 700 19px "Liberation Sans", sans-serif; fill: #444; }
.svgw { font: 700 15px "Liberation Serif", serif; fill: #f58220; }
.svg7 { font: 700 15px "Liberation Sans", sans-serif; fill: #fff; }
.svgz { font: 700 15px "Liberation Sans", sans-serif; fill: #000; }
.svgie { font: 700 42px "Liberation Sans", sans-serif; fill: #45bdf2; }
.svgx { font: 700 13px "Liberation Sans", sans-serif; fill: #fff; }

/* timetable bar */
.sched { position: absolute; left: 551px; top: 8px; width: 818px; height: 50px; border-radius: 25px; background: #244f6b; color: #fff; display: flex; align-items: center; font-family: "Noto Sans CJK SC", sans-serif; font-weight: 700; z-index: 1; overflow: hidden; }
.s-a { font-size: 22px; line-height: 46px; height: 50px; }
.s-first { width: 90px; padding-left: 34px; }
.s-now { width: 237px; height: 50px; background: #3e6479; display: flex; flex-direction: column; }
.s-now-t { flex: 1; display: flex; align-items: center; padding-left: 18px; gap: 7px; }
.s-big { font-size: 22px; }
.s-time { font-size: 18px; letter-spacing: .1px; }
.s-prog { height: 5px; display: flex; }
.s-p1 { width: 177px; background: #4363c0; }
.s-p2 { flex: 1; background: #7fb3e6; }
.s-second { margin-left: 12px; width: 66px; }
.s-div { width: 2px; height: 32px; background: #c9d3da; }
.s-third { margin-left: 22px; width: 68px; }
.s-fourth { width: 71px; }
.s-date { margin-left: 14px; font-size: 20.500px; width: 119px; letter-spacing: -.4px; line-height: 46px; height: 50px; flex: none; white-space: nowrap; }
.s-clock { font-size: 22.500px; letter-spacing: -.2px; line-height: 46px; height: 50px; white-space: nowrap; }

/* QQ */
.qq { position: absolute; left: 762px; top: 101px; width: 919px; height: 829px; display: flex; box-shadow: 0 2px 14px rgba(0,0,0,.25); z-index: 1; }
.qq-rail { width: 59px; background: #0099ff; display: flex; flex-direction: column; align-items: center; }
.qq-logo { margin-top: 17px; display: flex; align-items: center; gap: 2px; color: #fff; font-size: 13px; font-family: "Liberation Sans", sans-serif; }
.qq-ava { margin-top: 20px; }
.qq-list { width: 250px; background: #fff; display: flex; flex-direction: column; }
.qq-search { height: 66px; display: flex; align-items: center; padding: 18px 16px 0; gap: 8px; }
.qq-sbox { width: 184px; height: 28px; background: #f3f3f3; border-radius: 4px; display: flex; align-items: center; padding-left: 7px; gap: 4px; color: #999; font-size: 12px; }
.qq-plus { width: 26px; height: 26px; background: #f3f3f3; border-radius: 4px; color: #aaa; font-size: 18px; line-height: 24px; text-align: center; }
.qq-row { flex: 1; background: #eeeeee; padding: 12px 30px; }
.qq-teal { display: block; width: 12px; height: 12px; border-radius: 50%; background: #1abc9c; }
.qq-chat { flex: 1; display: flex; flex-direction: column; background: linear-gradient(100deg, #f6f0fc 0%, #eef0fc 50%, #e6effc 100%); }
.qq-ctrl { height: 25px; flex: none; display: flex; align-items: center; justify-content: flex-end; gap: 22px; padding-right: 9px; }
.qq-min { width: 10px; height: 3px; background: #777; }
.qq-max { width: 10px; height: 13px; border: 1.500px solid #222; }
.qq-head { height: 40px; flex: none; display: flex; align-items: center; padding: 0 0 6px 22px; border-bottom: 1px solid #e3e3ee; }
.qq-head h2 { margin: 0; font: 700 18px "Noto Sans CJK SC", sans-serif; color: #111; }
.qq-dot { width: 12px; height: 12px; border-radius: 50%; background: #1fd68a; margin-left: 8px; }
.qq-tools { margin-left: auto; display: flex; align-items: center; padding-right: 22px; }
.m19 { margin-left: 16px; } .m19 + .m19 { margin-left: 19px; } .m17 { margin-left: 17px; } .m7 { margin-left: 7px; } .m15 { margin-left: 15px; }
.qq-msgs { flex: 1; display: flex; justify-content: center; padding-top: 1px; }
.qq-stamp { height: 20px; padding: 0 8px; line-height: 20px; color: #aaa; background: #edeef8; border-radius: 4px; font-size: 13px; }
.qq-input { height: 207px; flex: none; background: #dbe8fc; border-top: 1px solid #d3e0f3; display: flex; flex-direction: column; align-items: flex-end; }
.qq-clock { margin: 10px 23px 0 0; }
.qq-send { margin: 136px 20px 0 0; width: 100px; height: 26px; border-radius: 4px; background: #0099ff; color: #7fcbff; display: flex; align-items: center; font-size: 14px; }
.qq-send span { width: 51px; text-align: right; }
.qq-send i { width: 1px; height: 18px; background: #66c2ff; margin: 0 11px 0 18px; }

/* Excel */
.xl { position: absolute; left: 140px; top: 185px; width: 1458px; height: 792px; display: flex; flex-direction: column; outline: 1px solid #7d8a83; background: #e6e6e6; z-index: 2; }
.xl-title { height: 34px; background: #217346; display: flex; align-items: center; position: relative; }
.qat { display: flex; align-items: center; padding-left: 22px; }
.q-un { margin-left: 30px; } .q-re { margin-left: 30px; } .q-to { margin-left: 30px; margin-right: 6px; }
.q-cu { margin-left: 22px; display: flex; flex-direction: column; gap: 2px; }
.q-cu > i:first-child { width: 6px; height: 1px; background: #fff; }
.caret { display: inline-block; width: 0; height: 0; border-left: 3px solid transparent; border-right: 3px solid transparent; border-top: 3px solid #666; }
.caret.wh { border-top-color: #fff; }
.caret.lt { border-top-color: #bbb; }
.caret.dk { border-top-color: #444; }
.xl-name { position: absolute; left: 644px; width: 166px; text-align: center; color: #d3e3d9; font-size: 12px; font-family: "Noto Sans CJK SC", sans-serif; white-space: nowrap; }
.xl-win { margin-left: auto; display: flex; align-items: center; padding-right: 18px; gap: 36px; }
.xl-tabs { height: 32px; background: #217346; display: flex; align-items: stretch; color: #fff; font-size: 12px; font-family: "Noto Sans CJK SC", sans-serif; }
.t { display: flex; align-items: center; justify-content: center; padding-bottom: 3px; }
.t-file { width: 69px; padding-right: 5px; } .t-on { width: 55px; background: #f0f0f0; color: #217346; } .t-ins { width: 56px; } .t-page { width: 82px; } .t-f { width: 58px; } .t-d { width: 57px; } .t-r { width: 57px; } .t-v { width: 55px; }
.t-tell { display: flex; align-items: center; gap: 4px; margin-left: 16px; padding-bottom: 3px; color: #a8cab6; }
.t-login { margin-left: auto; align-self: center; margin-right: 20px; padding-bottom: 3px; }
.t-share { width: 77px; background: #185c37; display: flex; align-items: center; justify-content: center; gap: 3px; padding-bottom: 3px; }
.ribbon { height: 124px; background: #f0f0f0; display: flex; border-bottom: 1px solid #d6d6d6; font-family: "Noto Sans CJK SC", sans-serif; color: #444; }
.rg { display: flex; flex-direction: column; margin: 5px 0 2px; border-right: 1px solid #c6c6c6; position: relative; }
.rg-body { flex: 1; }
.rg-label { height: 16px; line-height: 16px; text-align: center; color: #444; font-size: 12px; position: relative; }
.lab-clip { padding-right: 18px; }
.lab-font { padding-right: 16px; }
.launch { position: absolute; right: 4px; bottom: 2px; width: 7px; height: 7px; border: 1px solid #999; border-top-color: #999; background: linear-gradient(135deg, transparent 60%, #777 60%); }
.rg-rest { flex: 1; display: flex; justify-content: flex-end; align-items: flex-end; padding: 0 20px 4px 0; }
.g-clip { width: 134px; } .g-font { width: 338px; } .g-align { width: 312px; } .g-num { width: 155px; } .g-sty { width: 143px; } .g-cell { width: 115px; } .g-edit { width: 128px; }
.clip-body { display: flex; }
.paste { width: 60px; padding: 9px 0 0 19px; display: flex; flex-direction: column; align-items: center; color: #aaa; gap: 3px; }
.paste i { margin-top: 2px; }
.clip-small { padding-top: 2px; padding-left: 13px; }
.clip-small > div { height: 31px; display: flex; align-items: center; gap: 13px; }
.font-body { padding: 13px 0 0 7px; }
.frow1 { display: flex; height: 29px; }
.fbox { height: 28px; background: #fff; border: 1px solid #c6c6c6; display: flex; align-items: center; justify-content: space-between; padding: 0 5px 0 3px; font-size: 12px; color: #444; }
.fname { width: 190px; } .fsize { width: 39px; margin-left: 1px; font-family: "Liberation Sans", sans-serif; font-size: 13px; }
.fbtn { width: 46px; display: flex; justify-content: center; align-items: center; position: relative; }
.fa { font: 700 18px "Liberation Sans", sans-serif; color: #666; }
.fa2 { font-size: 18px; }
.tri { position: absolute; left: 27px; top: 5px; width: 0; height: 0; border-left: 3px solid transparent; border-right: 3px solid transparent; }
.tri.up { border-bottom: 3px solid #2f76c0; }
.tri.dn { border-top: 3px solid #2f76c0; }
.frow2 { display: flex; margin-top: 14px; height: 30px; }
.fit { width: 46px; display: flex; align-items: center; justify-content: center; gap: 3px; position: relative; }
.fit.sh { padding-right: 5px; }
.fit .caret { position: absolute; left: 37px; top: 13px; }
.gl { font: 700 18px "Liberation Sans", sans-serif; color: #555; }
.it { font-style: italic; font-family: "Liberation Serif", serif; }
.un { text-decoration: underline; font-size: 17px; }
.wen { flex-direction: column; gap: 0; line-height: 11px; }
.w1 { font: 10px "Liberation Sans", sans-serif; color: #555; }
.w2 { font-size: 12px; color: #2f76c0; }
.al-body { display: grid; grid-template-columns: repeat(3, 46px); grid-auto-rows: 28px; row-gap: 15px; padding: 14px 0 0 9px; }
.al { display: block; background-repeat: no-repeat; background-position: center; }
.al.on { background-color: #c0c0c0; }
.al { background-image: linear-gradient(#666,#666), linear-gradient(#666,#666), linear-gradient(#666,#666), linear-gradient(#666,#666); background-size: 18px 1px, 12px 1px, 18px 1px, 12px 1px; }
.a-top { background-position: center 5px, center 9px, center 13px, center 30px; }
.a-mid { background-position: center 8px, center 12px, center 16px, center 30px; }
.a-bot { background-position: center 15px, center 19px, center 23px, center 30px; }
.a-l { background-position: 14px 8px, 14px 12px, 14px 16px, 14px 20px; }
.a-c { background-position: center 8px, center 12px, center 16px, center 20px; }
.a-r { background-position: right 14px top 8px, right 14px top 12px, right 14px top 16px, right 14px top 20px; }
.num-body { padding: 3px 0 0 9px; }
.nbox { width: 137px; height: 27px; background: #fff; border: 1px solid #c6c6c6; padding: 3px 0 0 3px; }
.col-list { display: flex; flex-direction: column; }
.rrow { height: 32px; display: flex; align-items: center; gap: 4px; color: #444; }
.g-sty .rrow { padding-left: 24px; }
.g-cell .rrow { gap: 5px; }
.r-ins { padding-left: 18px; }
.r-ins .caret { margin-left: 16px; }
.r-fmt { padding-left: 22px; }
.r-fmt .caret { margin-left: 2px; }
.edit-body { display: grid; grid-template-columns: 70px 58px; grid-auto-rows: 32px; padding-left: 20px; align-items: center; }
.ec { display: flex; align-items: center; gap: 6px; }
.ec:nth-child(1), .ec:nth-child(5) { grid-column: 1; }
.sigma { font: 700 22px "Liberation Sans", sans-serif; color: #555; width: 20px; margin-right: 8px; }
.az { display: flex; flex-direction: column; font: 700 8px/8px "Liberation Sans", sans-serif; color: #2f76c0; }
.az .z { color: #7a4fb0; }

.fbar { height: 50px; background: #e6e6e6; display: flex; padding: 11px 6px 12px 5px; font-family: "Liberation Sans", sans-serif; }
.namebox { width: 102px; height: 27px; background: #fff; border: 1px solid #c6c6c6; display: flex; align-items: center; justify-content: space-between; padding: 0 5px 0 6px; font-size: 14px; color: #555; }
.namebox .caret { border-left-width: 4px; border-right-width: 4px; border-top-width: 4px; }
.fdots { width: 30px; background: radial-gradient(circle, #aaa 1px, transparent 1.500px) center / 4px 5px repeat-y; margin: 7px 0; }
.fxbox { width: 110px; height: 27px; background: #fff; border: 1px solid #c6c6c6; display: flex; align-items: center; padding-left: 11px; color: #bbb; font-size: 14px; }
.x2 { margin-left: 25px; }
.fxbox em { margin-left: 25px; font: italic 700 13px "Liberation Serif", serif; color: #666; }
.finput { flex: 1; height: 27px; margin-left: 3px; background: #fff; border: 1px solid #c6c6c6; display: flex; align-items: center; justify-content: space-between; padding: 0 7px 0 12px; font-size: 14px; color: #666; }
.chev { width: 6px; height: 6px; border-right: 2px solid #666; border-bottom: 2px solid #666; transform: rotate(45deg); margin-bottom: 3px; }

.sheetwrap { height: 491px; display: flex; overflow: hidden; }
.sheet { width: 1435px; overflow: hidden; flex: none; background: #fff; }
.colhead { height: 15px; display: grid; grid-template-columns: 26px 116px 51px repeat(39, 32px); background: #e6e6e6; border-bottom: 1px solid #ababab; font: 12px/15px "Liberation Serif", serif; color: #333; text-align: center; width: 1500px; }
.colhead span { border-right: 1px solid #ababab; }
.corner { background: linear-gradient(135deg, transparent 50%, #bcbcbc 50%) no-repeat 9px 1px / 11px 11px; }
.rh { display: block; flex: none; width: 26px; background: #e6e6e6; border-right: 1px solid #ababab; font: 12px "Liberation Serif", serif; color: #222; text-align: center; }
.row1 { height: 36px; display: flex; border-bottom: 2px solid #000; }
.row1 .rh { padding-top: 15px; }
.row1-t { display: flex; padding-left: 433px; font: 500 27px/34px "Noto Sans CJK SC", sans-serif; color: #000; white-space: nowrap; }
.t2 { margin-left: 375px; }
.row2 { height: 32px; display: grid; grid-template-columns: 26px 116px 51px repeat(8, 160px); width: 1500px; border-bottom: 1px solid #000; }
.ca, .cb { border-right: 1px solid #000; display: block; }
.cb { border-right-width: 2px; }
.bed { border-right: 2px solid #000; text-align: center; font: 500 18px/31px "Noto Sans CJK SC", sans-serif; color: #000; }
.row3 { height: 55px; display: grid; grid-template-columns: 26px 116px 51px repeat(40, 32px); width: 1500px; border-bottom: 1px solid #333; }
.hc { background: #d9d9d9; border-right: 1px solid #000; text-align: center; font: 500 20px/25px "Noto Sans CJK SC", sans-serif; color: #000; padding-top: 2px; }
.hc:nth-child(5n+3) { border-right-width: 2px; }
.bodyrow { display: flex; height: 354px; }
.grid { width: 1409px; flex: none; margin-left: 167px; display: grid; grid-template-columns: repeat(39, 32px); grid-template-rows: repeat(12, 29px); background-color: #fff;
  background-image:
    repeating-linear-gradient(to right, #000 0 2px, transparent 2px 160px),
    repeating-linear-gradient(to right, #000 0 1px, transparent 1px 32px),
    repeating-linear-gradient(to bottom, transparent 0 27px, #000 27px 28px, transparent 28px 29px); }
.val { font: 15px/30px "Liberation Mono", monospace; color: #111; text-align: right; padding-right: 4px; grid-column: 21; position: relative; }
.val::before { content: ""; position: absolute; left: 1px; top: 0; border-top: 5px solid #107c10; border-right: 5px solid transparent; }
.v1 { grid-row: 9; } .v2 { grid-row: 11; }
.vscroll { width: 23px; padding: 0 4px 0 6px; flex: none; display: flex; flex-direction: column; background: linear-gradient(to right, #e6e6e6 5px, #dadada 5px); }
.vb { height: 15px; background: #fff; border: 1px solid #bcbcbc; position: relative; display: block; flex: none; }
.vb::after { content: ""; position: absolute; left: 3px; border-left: 3px solid transparent; border-right: 3px solid transparent; }
.vup { margin-top: 6px; } .vup::after { top: 4px; border-bottom: 4px solid #666; }
.vdn { margin-top: auto; } .vdn::after { top: 5px; border-top: 4px solid #666; }
.vthumb { display: block; height: 87px; background: #fff; border: 1px solid #c0c0c0; margin-top: 140px; flex: none; }
.sheetbar { height: 28px; background: #e6e6e6; border-top: 1px solid #ababab; display: flex; align-items: center; padding-left: 340px; }
.tabtxt { font: 12px "Noto Sans CJK SC", sans-serif; color: #333; width: 67px; white-space: nowrap; }
.tabsep { width: 1px; height: 20px; background: #bbb; }
.addsheet { margin-left: 34px; }
.sdots { width: 3px; height: 12px; margin-left: 416px; background: repeating-linear-gradient(to bottom, #aaa 0 2px, transparent 2px 5px); }
.hscroll { margin-left: 15px; width: 542px; height: 15px; display: flex; background: #dadada; }
.hb { width: 15px; height: 15px; background: #fff; border: 1px solid #bcbcbc; position: relative; flex: none; }
.hb::after { content: ""; position: absolute; top: 3px; border-top: 3px solid transparent; border-bottom: 3px solid transparent; }
.hl::after { left: 3px; border-right: 4px solid #666; }
.hr::after { left: 5px; border-left: 4px solid #666; }
.hthumb { width: 456px; background: #fff; border: 1px solid #b0b0b0; margin-left: 1px; }
.htrack { flex: 1; }
.status { flex: 1; background: #f0f0f0; border-top: 1px solid #bdbdbd; border-bottom: 1px solid #217346; display: flex; justify-content: flex-end; align-items: stretch; }
.sv { width: 46px; display: flex; align-items: center; justify-content: center; }
.sv.on { background: #c6c6c6; }
.zoomer { width: 207px; display: flex; align-items: center; padding-left: 3px; color: #555; }
.zm { font: 700 15px "Liberation Sans", sans-serif; width: 12px; text-align: center; }
.ztrack { width: 100px; height: 1px; background: #a5a5a5; position: relative; margin: 0 1px; }
.zthumb { position: absolute; left: 43px; top: -7px; width: 4px; height: 15px; background: #666; }
.zp { margin-left: 1px; }
.zpct { margin-left: 18px; font: 12px "Liberation Sans", sans-serif; color: #555; }

/* Open with dialog */
.owd { position: absolute; left: 760px; top: 270px; width: 391px; height: 523px; background: #fff; border: 1px solid #c4c4c4; font-family: "Open Sans", "Noto Sans CJK SC", sans-serif; color: #111; display: flex; flex-direction: column; z-index: 3; }
.owd h1 { margin: 0; padding: 17px 15px 0 24px; font-size: 20px; line-height: 26px; font-weight: 400; width: 340px; }
.owd h3 { margin: 15px 0 0; font-size: 17px; font-weight: 400; line-height: 24px; padding-left: 24px; position: relative; height: 29px; }
.owd h3::after { content: ""; position: absolute; left: 17px; width: 356px; top: 27px; height: 1px; background: #c4c4c4; }
.owd .h-other { margin-top: 10px; }
.app { height: 50px; display: flex; padding: 0 0 0 24px; gap: 12px; font-size: 15px; line-height: 20px; }
.app.sel { background: #0b7fdb; color: #fff; margin-top: 2px; padding-top: 5px; }
.aic { width: 40px; height: 40px; background: #0078d7; flex: none; }
.sel .aic { background: #0a79d2; }
.apps { margin-top: 6px; }
.lat { letter-spacing: .4px; }
.owd-foot { margin-top: 5px; display: flex; justify-content: flex-end; padding-right: 23px; }
.okbtn { width: 200px; height: 32px; border: 0; background: #cccccc; font: 500 14px "Noto Sans CJK SC", sans-serif; color: #111; }

/* Properties */
.prop { position: absolute; left: 72px; top: 479px; width: 420px; height: 620px; background: #f0f0f0; box-shadow: 0 0 10px rgba(0,0,0,.3); display: flex; flex-direction: column; z-index: 3; }
.prop-title { height: 30px; background: #fff; display: flex; align-items: center; padding: 0 12px 0 11px; gap: 7px; color: #8f8f8f; font-size: 12.500px; }
.pclose { margin-left: auto; }
.ptabs { height: 35px; display: flex; align-items: flex-end; padding-left: 7px; margin-bottom: -1px; position: relative; z-index: 1; }
.pt { height: 23px; background: #f0f0f0; border: 1px solid #d9d9d9; border-bottom: 0; line-height: 21px; margin-left: -1px; text-align: center; }
.pt.on { width: 52px; height: 25px; background: #fff; margin-left: 0; text-align: left; padding-left: 8px; }
.p2 { width: 47px; text-align: left; padding-left: 5px; } .p3 { width: 61px; } .p4 { width: 71px; }
.ppanel { margin: 0 11px 0 7px; background: #fff; border: 1px solid #d9d9d9; flex: 1; padding: 0 15px; }
.phead { height: 70px; border-bottom: 1px solid #a0a0a0; display: flex; padding-top: 17px; }
.phead svg { margin: 0 0 0 5px; }
.pinput { margin-left: 60px; width: 287px; height: 30px; border: 1px solid #7a7a7a; padding: 9px 0 0 3px; line-height: 18px; margin-right: -3px; flex: none; }
.psec { border-bottom: 1px solid #a0a0a0; padding: 8px 0; }
.psec.last { border: 0; }
.prow { height: 34px; display: flex; align-items: center; white-space: nowrap; }
.prow label { width: 86px; flex: none; }
.pnote { margin-right: 8px; flex: none; }
.w-path { letter-spacing: .4px; }
.w-num { letter-spacing: .25px; }
.change { margin-left: auto; margin-right: -1px; width: 121px; height: 27px; background: #e5f1fb; border: 1px solid #0078d7; font: 12px "Open Sans", "Noto Sans CJK SC", sans-serif; color: #222; padding: 0; }
.chk { width: 13px; height: 13px; background: #fff; border: 1px solid #333; margin-right: 3px; flex: none; }
.cl1 { width: 77px; }
.adv { margin-left: auto; margin-right: -3px; width: 86px; height: 27px; background: #e1e1e1; border: 1px solid #adadad; font: 12px "Open Sans", "Noto Sans CJK SC", sans-serif; color: #222; padding: 0; }

/* IME */
.ime { position: absolute; left: 1768px; top: 1018px; width: 50px; height: 22px; background: #fff; display: flex; align-items: center; z-index: 4; }
.ime-dots { width: 2px; height: 22px; margin-left: 4px; background: repeating-linear-gradient(to bottom, #bbb 0 2px, transparent 2px 4px); }
.ime-m { margin-left: 6px; width: 16px; height: 16px; border: 1px solid #888; font: 14px/14px "Liberation Sans", sans-serif; text-align: center; color: #111; }
.ime-arrow { margin-left: 9px; display: flex; flex-direction: column; align-items: center; gap: 3px; }
.ime-arrow > i:first-child { width: 5px; height: 2px; background: #222; }

/* Taskbar */
.taskbar { position: absolute; left: 0; top: 1040px; width: 1920px; height: 40px; background: rgba(0,0,0,.84); display: flex; justify-content: space-between; color: #fff; z-index: 5; }
.tb-left { display: flex; align-items: stretch; }
.tb-start { width: 48px; display: flex; align-items: center; justify-content: center; }
.tb-view { width: 50px; display: flex; align-items: center; justify-content: center; }
.tb-app { width: 49px; display: flex; align-items: center; justify-content: center; position: relative; }
.tb-app.on::after { content: ""; position: absolute; left: 4.500px; right: 4.500px; bottom: 0; height: 2px; background: #76b9ed; }
.tray { display: grid; grid-template-columns: 32px 32px 32px 32px 40px 39px 40px 74px 53px; }
.tray > div { display: flex; align-items: center; justify-content: center; }
.tray > .tb-clock { flex-direction: column; font: 12px/19px "Open Sans", sans-serif; }
.tb-note { position: relative; }
.badge { position: absolute; left: 30px; top: 14px; width: 16px; height: 16px; border-radius: 50%; background: #444; border: 1.500px solid #888; font: 700 10px/13px "Liberation Sans", sans-serif; text-align: center; }
```
